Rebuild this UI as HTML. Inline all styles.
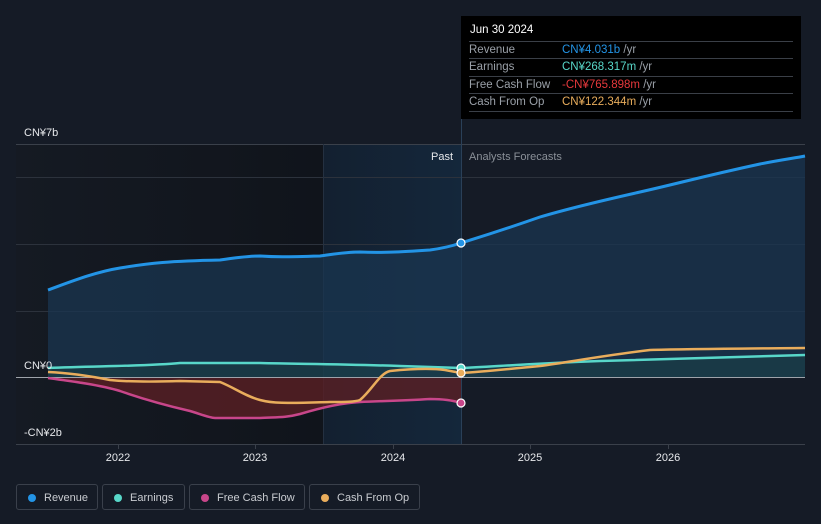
<!DOCTYPE html>
<html><head><meta charset="utf-8"><style>
body{margin:0;background:#151b26;width:821px;height:524px;overflow:hidden;font-family:"Liberation Sans","Noto Sans CJK SC",sans-serif;}
.tt{position:absolute;left:461px;top:16px;width:340px;height:103px;background:#000;color:#fff;font-size:11.5px;}
.tt .h{position:absolute;left:9px;top:8px;font-size:11.5px;}
.row{position:absolute;left:8px;width:324px;border-top:1px solid #3a3f47;height:17px;line-height:17px;color:#9aa0a8;}
.row span{position:absolute;left:93px;}
.leg{position:absolute;top:484px;height:26px;border:1px solid #3a404b;border-radius:3px;color:#c9ccd1;font-size:11px;line-height:26px;box-sizing:border-box;}
.leg i{position:absolute;left:11px;top:9px;width:8px;height:8px;border-radius:50%;}
.leg b{font-weight:normal;position:absolute;left:27px;}
</style></head><body>
<svg width="821" height="524" style="position:absolute;left:0;top:0">
<defs>
<linearGradient id="pg" x1="0" x2="1"><stop offset="0" stop-color="#151a23"/><stop offset="1" stop-color="#10141b"/></linearGradient>
<linearGradient id="hl" x1="0" x2="1"><stop offset="0" stop-color="#132030"/><stop offset="1" stop-color="#14273b"/></linearGradient>
</defs>
<rect x="16" y="144" width="307" height="300" fill="url(#pg)"/>
<rect x="323" y="144" width="138" height="300" fill="url(#hl)"/>
<g stroke="#2c323c" stroke-width="1">
<line x1="16" y1="144.5" x2="805" y2="144.5" stroke="#3a404a"/>
<line x1="16" y1="177.5" x2="805" y2="177.5"/>
<line x1="16" y1="244.5" x2="805" y2="244.5"/>
<line x1="16" y1="311.5" x2="805" y2="311.5"/>
<line x1="16" y1="444.5" x2="805" y2="444.5" stroke="#3a404a"/>
<line x1="323.5" y1="144" x2="323.5" y2="444" stroke="#243040"/>
<line x1="461.5" y1="118" x2="461.5" y2="444" stroke="#2a4058"/>
</g>
<path d="M48,290 C70,282 95,272 120,268 C150,263 170,261 220,260 C240,257 250,256 260,256 C275,257 285,257 320,256 C335,254 345,252 360,252 C380,253 400,252 430,250 C445,248 455,245 461,243 C480,237 500,231 540,217 C570,208 600,201 640,192 C680,183 700,177 760,164 C780,160 795,158 805,156 L805,377 L48,377 Z" fill="#1a3550" opacity="0.75"/>
<path d="M48,378 C70,381 100,385 120,391 C140,398 160,404 190,411 C200,414 210,418 215,418 L260,418 C275,417 285,418 300,414 C320,408 340,403 360,402 C380,401 400,401 430,399 C445,399 455,401 461,403 L461,377 L48,377 Z" fill="#5a1f24" opacity="0.8"/>
<path d="M48,368 C100,366 150,366 180,363 L260,363 C300,364 340,364 400,366 L461,368 C490,367 520,364 600,361 L805,355 L805,377 L48,377Z" fill="#1d4d49" opacity="0.35"/>
<line x1="16" y1="377.5" x2="805" y2="377.5" stroke="#9ea3aa" stroke-width="1"/>
<path d="M48,290 C70,282 95,272 120,268 C150,263 170,261 220,260 C240,257 250,256 260,256 C275,257 285,257 320,256 C335,254 345,252 360,252 C380,253 400,252 430,250 C445,248 455,245 461,243 C480,237 500,231 540,217 C570,208 600,201 640,192 C680,183 700,177 760,164 C780,160 795,158 805,156" fill="none" stroke="#2394e6" stroke-width="3"/>
<path d="M48,368 C100,366 150,366 180,363 L260,363 C300,364 340,364 400,366 L461,368 C490,367 520,364 600,361 L805,355" fill="none" stroke="#58d7c9" stroke-width="2.5"/>
<path d="M48,378 C70,381 100,385 120,391 C140,398 160,404 190,411 C200,414 210,418 215,418 L260,418 C275,417 285,418 300,414 C320,408 340,403 360,402 C380,401 400,401 430,399 C445,399 455,401 461,403" fill="none" stroke="#c8468a" stroke-width="2.5"/>
<path d="M48,372 C70,373 90,376 110,380 C130,382 150,382 180,381 L220,382 C235,388 245,396 260,400 C275,404 290,403 330,402 C345,402 355,402 360,400 C372,390 380,373 390,371 C410,369 430,368 445,370 L461,373 C480,372 500,370 540,366 C570,362 600,356 650,350 C680,349 700,349 805,348" fill="none" stroke="#e9ad5c" stroke-width="2.5"/>
<circle cx="461" cy="243" r="4" fill="#2394e6" stroke="#fff" stroke-width="1.2"/>
<circle cx="461" cy="368" r="4" fill="#58d7c9" stroke="#fff" stroke-width="1.2"/>
<circle cx="461" cy="373" r="4" fill="#e9ad5c" stroke="#fff" stroke-width="1.2"/>
<circle cx="461" cy="403" r="4" fill="#c8468a" stroke="#fff" stroke-width="1.2"/>
<g stroke="#3a404a"><line x1="118.5" y1="444" x2="118.5" y2="449"/><line x1="255.5" y1="444" x2="255.5" y2="449"/><line x1="393.5" y1="444" x2="393.5" y2="449"/><line x1="530.5" y1="444" x2="530.5" y2="449"/><line x1="668.5" y1="444" x2="668.5" y2="449"/></g>
<g font-family="Liberation Sans, sans-serif" font-size="11" fill="#e6e8eb">
<text x="24" y="136">CN¥7b</text>
<text x="24" y="369">CN¥0</text>
<text x="24" y="436">-CN¥2b</text>
<text x="453" y="160" text-anchor="end">Past</text>
<text x="469" y="160" fill="#8a9098">Analysts Forecasts</text>
<text x="118" y="461" text-anchor="middle">2022</text>
<text x="255" y="461" text-anchor="middle">2023</text>
<text x="393" y="461" text-anchor="middle">2024</text>
<text x="530" y="461" text-anchor="middle">2025</text>
<text x="668" y="461" text-anchor="middle">2026</text>
</g>
</svg>
<div class="tt">
<div class="h">Jun 30 2024</div>
<div class="row" style="top:25px">Revenue<span style="color:#2394e6">CN¥4.031b <em style="font-style:normal;color:#9aa0a8">/yr</em></span></div>
<div class="row" style="top:42px">Earnings<span style="color:#58d7c9">CN¥268.317m <em style="font-style:normal;color:#9aa0a8">/yr</em></span></div>
<div class="row" style="top:60px">Free Cash Flow<span style="color:#e5383b">-CN¥765.898m <em style="font-style:normal;color:#9aa0a8">/yr</em></span></div>
<div class="row" style="top:77px;border-bottom:1px solid #3a3f47">Cash From Op<span style="color:#e9ad5c">CN¥122.344m <em style="font-style:normal;color:#9aa0a8">/yr</em></span></div>
</div>
<div class="leg" style="left:16px;width:82px"><i style="background:#2394e6"></i><b>Revenue</b></div>
<div class="leg" style="left:102px;width:83px"><i style="background:#58d7c9"></i><b>Earnings</b></div>
<div class="leg" style="left:189px;width:116px"><i style="background:#c8468a"></i><b>Free Cash Flow</b></div>
<div class="leg" style="left:309px;width:111px"><i style="background:#e9ad5c"></i><b>Cash From Op</b></div>
</body></html>
